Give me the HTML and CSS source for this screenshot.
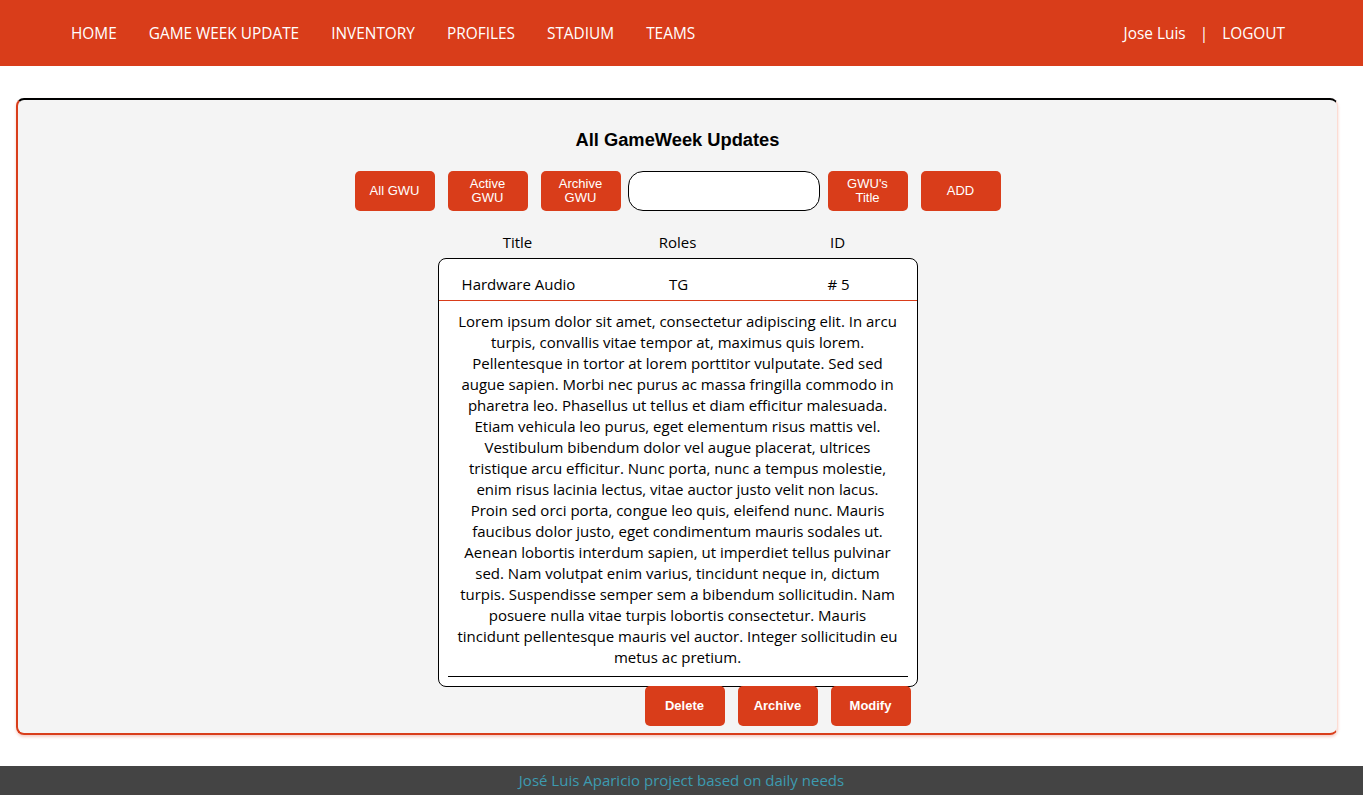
FILE: index.html
```html
<!DOCTYPE html>
<html lang="en">
<head>
<meta charset="utf-8">
<title>All GameWeek Updates</title>
<link rel="stylesheet" href="styles.css">
</head>
<body>
<header class="topbar">
  <nav class="nav-left">
    <a class="nav-link" href="#">HOME</a>
    <a class="nav-link" href="#">GAME WEEK UPDATE</a>
    <a class="nav-link" href="#">INVENTORY</a>
    <a class="nav-link" href="#">PROFILES</a>
    <a class="nav-link" href="#">STADIUM</a>
    <a class="nav-link" href="#">TEAMS</a>
  </nav>
  <div class="nav-right">
    <span class="user">Jose Luis</span>
    <span class="sep">|</span>
    <a class="nav-link" href="#">LOGOUT</a>
  </div>
</header>

<main class="card">
  <h1 class="card-title">All GameWeek Updates</h1>
  <div class="toolbar">
    <button class="btn">All GWU</button>
    <button class="btn">Active<br>GWU</button>
    <button class="btn">Archive<br>GWU</button>
    <input class="search" type="text">
    <button class="btn">GWU's<br>Title</button>
    <button class="btn">ADD</button>
  </div>

  <div class="table">
    <div class="thead">
      <span>Title</span>
      <span>Roles</span>
      <span>ID</span>
    </div>
    <div class="entry">
      <div class="entry-row">
        <span>Hardware Audio</span>
        <span>TG</span>
        <span># 5</span>
      </div>
      <p class="entry-text">Lorem ipsum dolor sit amet, consectetur adipiscing elit. In arcu turpis, convallis vitae tempor at, maximus quis lorem. Pellentesque in tortor at lorem porttitor vulputate. Sed sed augue sapien. Morbi nec purus ac massa fringilla commodo in pharetra leo. Phasellus ut tellus et diam efficitur malesuada. Etiam vehicula leo purus, eget elementum risus mattis vel. Vestibulum bibendum dolor vel augue placerat, ultrices tristique arcu efficitur. Nunc porta, nunc a tempus molestie, enim risus lacinia lectus, vitae auctor justo velit non lacus. Proin sed orci porta, congue leo quis, eleifend nunc. Mauris faucibus dolor justo, eget condimentum mauris sodales ut. Aenean lobortis interdum sapien, ut imperdiet tellus pulvinar sed. Nam volutpat enim varius, tincidunt neque in, dictum turpis. Suspendisse semper sem a bibendum sollicitudin. Nam posuere nulla vitae turpis lobortis consectetur. Mauris tincidunt pellentesque mauris vel auctor. Integer sollicitudin eu metus ac pretium.</p>
      <div class="entry-rule"></div>
    </div>
    <div class="actions">
      <button class="btn btn-bold">Delete</button>
      <button class="btn btn-bold">Archive</button>
      <button class="btn btn-bold">Modify</button>
    </div>
  </div>
</main>

<footer class="footer">José Luis Aparicio project based on daily needs</footer>
</body>
</html>
```

FILE: styles.css
```css
* { box-sizing: border-box; }
html, body { margin: 0; padding: 0; }
body {
  background: #ffffff;
  font-family: "Open Sans", "Noto Sans", sans-serif;
  color: #000;
}

.topbar {
  height: 66px;
  background: #d93d1a;
  display: flex;
  align-items: center;
  justify-content: space-between;
  padding: 0 78px 0 71px;
  color: #fff;
  font-size: 15.4px;
}
.nav-left { display: flex; gap: 32px; }
.nav-right { display: flex; align-items: center; }
.nav-link { color: #fff; text-decoration: none; }
.sep { margin: 0 14px 0 14px; }

.card {
  margin: 32px 25px 0 16px;
  height: 637px;
  background: #f4f4f4;
  border: 1px solid #fcdcd3;
  border-top: 2px solid #000;
  border-left: 2px solid #d93d1a;
  border-bottom: 2px solid #d93d1a;
  border-radius: 8px;
  box-shadow: 0 2px 3px rgba(217, 61, 26, 0.25);
  display: flex;
  flex-direction: column;
  align-items: center;
  padding-top: 28px;
}
.card-title {
  margin: 0;
  font-family: "Liberation Sans", Arial, sans-serif;
  font-size: 18.3px;
  line-height: 24px;
  font-weight: bold;
}

.toolbar {
  display: flex;
  align-items: center;
  gap: 13px;
  margin-top: 19px;
}
.btn {
  width: 80px;
  height: 40px;
  border: none;
  border-radius: 5px;
  background: #d93d1a;
  color: #fff;
  font-family: "Liberation Sans", Arial, sans-serif;
  font-size: 13px;
  line-height: 14px;
  padding: 0;
}
.btn-bold { font-weight: bold; }
.search {
  width: 192px;
  height: 40px;
  border: 1px solid #000;
  border-radius: 15px;
  background: #fff;
  margin: 0 -5px 0 -6px;
}

.table {
  width: 480px;
  margin-top: 21px;
  display: flex;
  flex-direction: column;
  font-size: 15px;
  line-height: 21px;
}
.thead, .entry-row {
  display: grid;
  grid-template-columns: 160px 160px 160px;
  text-align: center;
}
.entry {
  margin-top: 5px;
  background: #fff;
  border: 1px solid #000;
  border-radius: 8px;
  padding-bottom: 9px;
}
.entry-row {
  padding-top: 15px;
  padding-bottom: 5px;
  border-bottom: 1px solid #d93d1a;
}
.entry-text {
  margin: 10px 0 0;
  padding: 0 18px;
  text-align: center;
}
.entry-rule {
  margin: 8px 9px 0;
  height: 1px;
  background: #000;
}
.actions {
  display: flex;
  justify-content: flex-end;
  gap: 13px;
  padding-right: 7px;
  margin-top: -1px;
}

.footer {
  margin-top: 31px;
  height: 29px;
  background: #444444;
  color: #3d9bb0;
  text-align: center;
  font-size: 15px;
  line-height: 29px;
}
```
